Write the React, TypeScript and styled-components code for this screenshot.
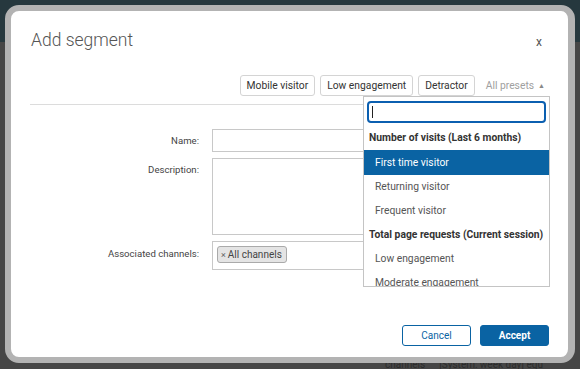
import React from "react";
import styled, { createGlobalStyle } from "styled-components";

const GlobalStyle = createGlobalStyle`
  html, body {
    margin: 0;
    padding: 0;
    background: #454545;
  }
  body {
    font-family: Roboto, "Liberation Sans", Arial, sans-serif;
  }
`;

const BLUE = "#0a63a3";

const Page = styled.div`
  position: relative;
  width: 580px;
  height: 369px;
  overflow: hidden;
  background: #464646;
  display: flex;
  flex-direction: column;
`;

const TopBand = styled.div`
  height: 42px;
  background: #26383e;
`;

const BackdropText = styled.div`
  margin-top: auto;
  display: flex;
  gap: 14px;
  padding-left: 385px;
  color: #2c2c2c;
  font-size: 10px;
  line-height: 9px;
  white-space: nowrap;
`;

const Modal = styled.div`
  position: absolute;
  left: 5px;
  top: 5px;
  width: 557px;
  height: 346px;
  border: 6px solid #b3b3b3;
  border-right-width: 7px;
  border-radius: 14px;
  background: #fff;
  display: flex;
  flex-direction: column;
`;

const Header = styled.div`
  display: flex;
  align-items: center;
  justify-content: space-between;
  padding: 17px 26px 0 20px;
  height: 24px;
`;

const Title = styled.h2`
  margin: 0;
  font-size: 17.5px;
  font-weight: 300;
  color: #555;
  line-height: 24px;
`;

const Close = styled.span`
  font-size: 12px;
  color: #555;
  margin-top: 3px;
`;

const PresetBar = styled.div`
  display: flex;
  justify-content: flex-end;
  align-items: center;
  gap: 5px;
  margin: 23px 19px 0 19px;
  padding-bottom: 8px;
  border-bottom: 1px solid #dcdcdc;
`;

const PresetButton = styled.button`
  height: 21px;
  padding: 0 6px;
  background: #fff;
  border: 1px solid #d4d4d4;
  border-radius: 3px;
  font-family: inherit;
  font-size: 10.3px;
  color: #333;
`;

const AllPresets = styled.span`
  margin-left: 6px;
  margin-right: 4px;
  font-size: 10.3px;
  color: #a0a0a0;
  display: flex;
  align-items: center;
  gap: 4px;
`;

const Caret = styled.span`
  font-size: 7px;
  color: #888;
`;

const Form = styled.div`
  display: flex;
  flex-direction: column;
  gap: 6px;
  padding: 24px 19px 0 0;
`;

const Row = styled.div`
  display: grid;
  grid-template-columns: 188px 1fr;
  column-gap: 13px;
  align-items: start;
`;

const Label = styled.label<{ $offset?: number }>`
  text-align: right;
  font-size: 9.6px;
  color: #444;
  padding-top: ${(p) => p.$offset ?? 6}px;
`;

const Field = styled.div<{ $h: number }>`
  height: ${(p) => p.$h}px;
  border: 1px solid #c8c8c8;
  box-sizing: border-box;
  display: flex;
  align-items: flex-start;
  padding: 4px 0 0 4px;
`;

const Tag = styled.span`
  display: inline-flex;
  align-items: center;
  gap: 2px;
  height: 17px;
  padding: 0 4px 0 3px;
  background: #e4e4e4;
  border: 1px solid #aaa;
  border-radius: 3px;
  font-size: 10px;
  color: #444;
  box-sizing: border-box;
`;

const TagX = styled.span`
  font-size: 9px;
  color: #666;
`;

const Footer = styled.div`
  margin-top: auto;
  display: flex;
  justify-content: flex-end;
  gap: 9px;
  padding: 0 19px 11px 0;
`;

const FooterButton = styled.button<{ $primary?: boolean }>`
  width: 69px;
  height: 21px;
  border-radius: 3px;
  border: 1px solid ${BLUE};
  background: ${(p) => (p.$primary ? BLUE : "#fff")};
  color: ${(p) => (p.$primary ? "#fff" : BLUE)};
  font-family: inherit;
  font-size: 10px;
  font-weight: ${(p) => (p.$primary ? 700 : 400)};
`;

const Dropdown = styled.div`
  position: absolute;
  left: 352px;
  top: 85px;
  width: 187px;
  height: 191px;
  box-sizing: border-box;
  border: 1px solid #c4c4c4;
  background: #fff;
  overflow: hidden;
  display: flex;
  flex-direction: column;
`;

const SearchBox = styled.div`
  flex: none;
  margin: 4px 3px 3px 3px;
  height: 22px;
  box-sizing: border-box;
  border: 2px solid #0b5fb0;
  border-radius: 4px;
  display: flex;
  align-items: center;
  padding-left: 3px;
`;

const Cursor = styled.span`
  width: 1px;
  height: 12px;
  background: #222;
`;

const Option = styled.div<{ $group?: boolean; $active?: boolean }>`
  flex: none;
  height: ${(p) => (p.$active ? 25 : 24)}px;
  line-height: ${(p) => (p.$active ? 25 : 24)}px;
  font-size: 10.3px;
  padding-left: ${(p) => (p.$group ? 5 : 11)}px;
  font-weight: ${(p) => (p.$group ? 700 : 400)};
  color: ${(p) => (p.$active ? "#fff" : p.$group ? "#333" : "#555")};
  background: ${(p) => (p.$active ? BLUE : "transparent")};
  white-space: nowrap;
`;

const options = [
  { text: "Number of visits (Last 6 months)", group: true },
  { text: "First time visitor", active: true },
  { text: "Returning visitor" },
  { text: "Frequent visitor" },
  { text: "Total page requests (Current session)", group: true },
  { text: "Low engagement" },
  { text: "Moderate engagement" },
];

const App: React.FC = () => {
  return (
    <Page>
      <GlobalStyle />
      <TopBand />
      <BackdropText>
        <span>channels</span>
        <span>[System: week day] equ</span>
      </BackdropText>
      <Modal>
        <Header>
          <Title>Add segment</Title>
          <Close>x</Close>
        </Header>
        <PresetBar>
          <PresetButton>Mobile visitor</PresetButton>
          <PresetButton>Low engagement</PresetButton>
          <PresetButton>Detractor</PresetButton>
          <AllPresets>
            All presets <Caret>▲</Caret>
          </AllPresets>
        </PresetBar>
        <Form>
          <Row>
            <Label>Name:</Label>
            <Field $h={23} />
          </Row>
          <Row>
            <Label>Description:</Label>
            <Field $h={77} />
          </Row>
          <Row>
            <Label $offset={7}>Associated channels:</Label>
            <Field $h={29}>
              <Tag>
                <TagX>×</TagX>All channels
              </Tag>
            </Field>
          </Row>
        </Form>
        <Footer>
          <FooterButton>Cancel</FooterButton>
          <FooterButton $primary>Accept</FooterButton>
        </Footer>
        <Dropdown>
          <SearchBox>
            <Cursor />
          </SearchBox>
          {options.map((o) => (
            <Option key={o.text} $group={o.group} $active={o.active}>
              {o.text}
            </Option>
          ))}
        </Dropdown>
      </Modal>
    </Page>
  );
};

export default App;
